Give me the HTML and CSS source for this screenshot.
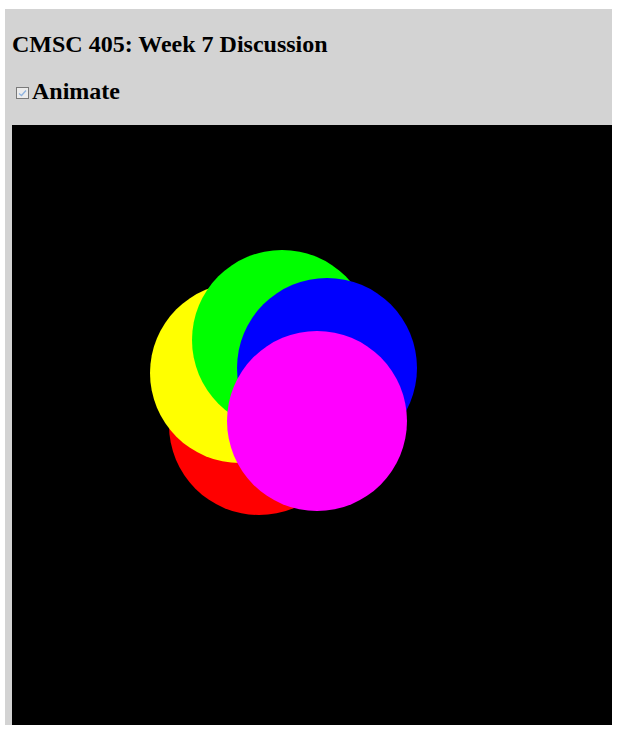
FILE: index.html
```html
<!DOCTYPE html>
<html>
<head>
<meta charset="utf-8">
<title>CMSC 405: Week 7 Discussion</title>
<link rel="stylesheet" href="styles.css">
</head>
<body>
<div class="panel">
  <h2 class="title">CMSC 405: Week 7 Discussion</h2>
  <h2 class="control"><input type="checkbox" id="anim" class="check" checked><label for="anim">Animate</label></h2>
  <div class="canvas">
    <svg width="600" height="600" viewBox="0 0 600 600">
      <circle cx="247" cy="300" r="90" fill="#ff0000"/>
      <circle cx="228" cy="248" r="90" fill="#ffff00"/>
      <circle cx="270" cy="215" r="90" fill="#00ff00"/>
      <circle cx="315" cy="243" r="90" fill="#0000ff"/>
      <circle cx="305" cy="296" r="90" fill="#ff00ff"/>
    </svg>
  </div>
</div>
</body>
</html>
```
FILE: styles.css
```css
html, body {
  background: #ffffff;
}
body {
  margin: 9px 0 0 5px;
  font-family: "Liberation Serif", "Times New Roman", serif;
}
.panel {
  width: 600px;
  padding: 2px 0 0 7px;
  background: #d3d3d3;
  display: flow-root;
}
.title, .control {
  font-size: 24px;
  font-weight: bold;
  margin: 19.92px 0;
  color: #000;
}
.check {
  -webkit-appearance: none;
  appearance: none;
  margin: 3px 3px 0 4px;
  width: 13px;
  height: 12px;
  border: 1px solid #7a7a7a;
  background: #ececec url("data:image/svg+xml;utf8,<svg xmlns='http://www.w3.org/2000/svg' width='11' height='10' viewBox='0 0 11 10'><path d='M2 5.5 L4.5 7.5 L9 2.5' fill='none' stroke='%2390b4e0' stroke-width='1.3'/></svg>") center / 11px 10px no-repeat;
  box-sizing: border-box;
  vertical-align: baseline;
}
.canvas {
  width: 600px;
  height: 600px;
  background: #000;
}
.canvas svg {
  display: block;
}
```
